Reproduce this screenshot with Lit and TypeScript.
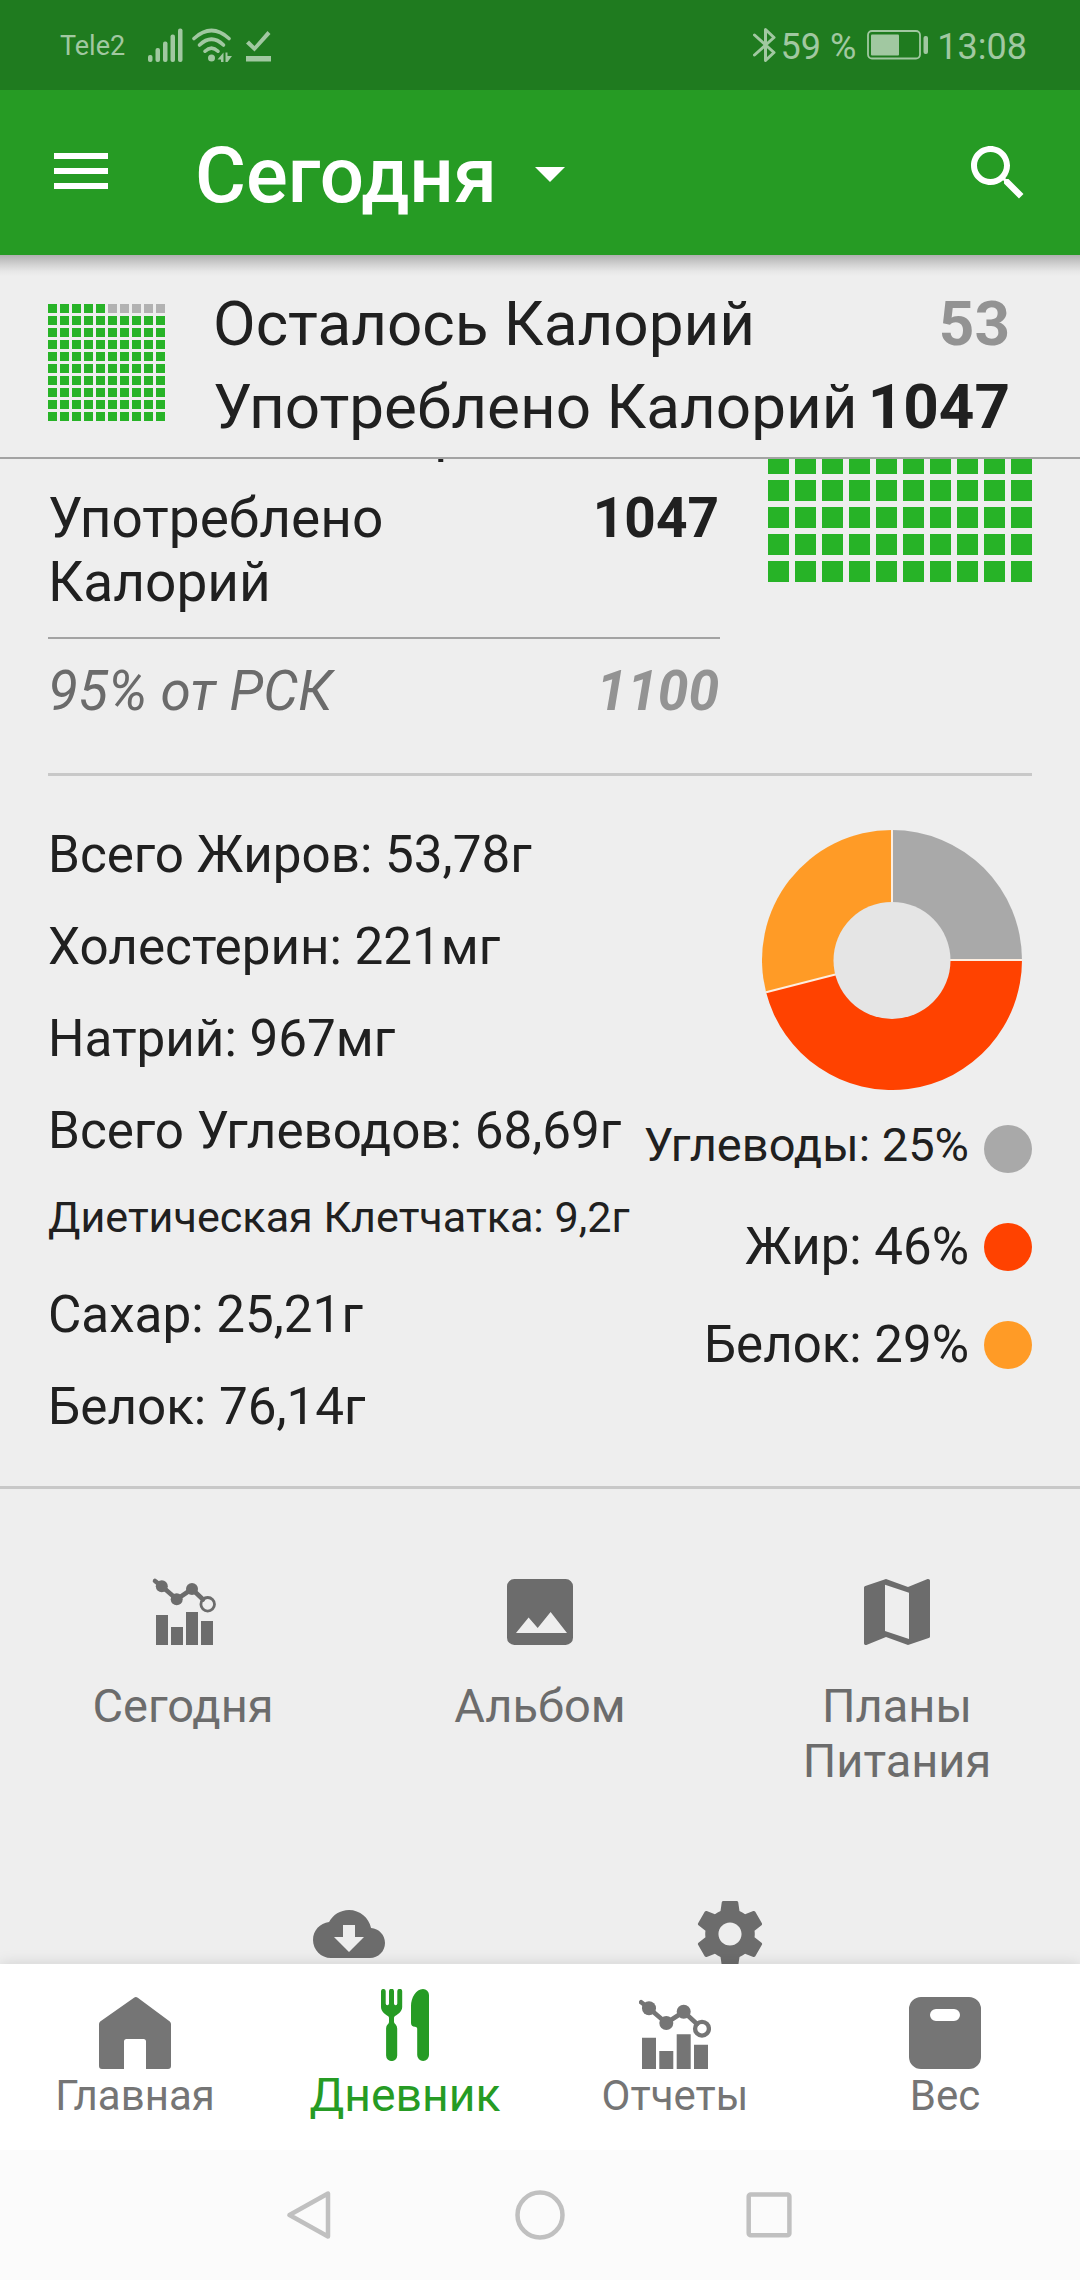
import { LitElement, html, css, svg } from "lit";
import { customElement, property } from "lit/decorators.js";
import { classMap } from "lit/directives/class-map.js";

/** 10×10 waffle chart: each cell is one percent, filled from the bottom up. */
@customElement("percent-grid")
class PercentGrid extends LitElement {
  @property({ type: Number }) percent = 0;

  static styles = css`
    :host {
      display: grid;
      grid-template-columns: repeat(10, var(--cell));
      grid-auto-rows: var(--cell);
      gap: var(--gap);
    }
    .cell {
      background: #27b327;
    }
    .rest {
      background: #b2b2b2;
    }
  `;

  render() {
    const cells = Array.from({ length: 100 }, (_, i) => {
      const row = Math.floor(i / 10);
      const rank = (9 - row) * 10 + (i % 10);
      return rank >= this.percent;
    });
    return cells.map((rest) => html`<i class=${classMap({ cell: true, rest })}></i>`);
  }
}

interface Slice {
  label: string;
  value: number;
  tone: string;
  compact?: boolean;
}

const SLICES: Slice[] = [
  { label: "Углеводы", value: 25, tone: "gray", compact: true },
  { label: "Жир", value: 46, tone: "red" },
  { label: "Белок", value: 29, tone: "orange" },
];

const NUTRIENTS = [
  { text: "Всего Жиров: 53,78г" },
  { text: "Холестерин: 221мг" },
  { text: "Натрий: 967мг" },
  { text: "Всего Углеводов: 68,69г" },
  { text: "Диетическая Клетчатка: 9,2г", small: true },
  { text: "Сахар: 25,21г" },
  { text: "Белок: 76,14г" },
];

const chartIcon = html`<svg class="ic" viewBox="0 0 72 72">
  <path d="M9 39h12v30H9zM24 51h12v18H24zM39 36h12v33H39zM54 45h12v24H54z" />
  <path class="ln" d="M8 5 14.8 10.3 29.7 23.3 45 13 56 23.5" />
  <circle cx="14.8" cy="10.3" r="6" /><circle cx="29.7" cy="23.3" r="6" /><circle cx="45" cy="13" r="6" />
  <circle class="ring" cx="60.7" cy="28.3" r="6.8" />
</svg>`;

const imageIcon = html`<svg class="ic" viewBox="0 0 72 72">
  <path
    fill-rule="evenodd"
    d="M10.300 3h51.400a7.300 7.300 0 0 1 7.300 7.300v51.400a7.300 7.300 0 0 1-7.300 7.300H10.300A7.300 7.300 0 0 1 3 61.700V10.300A7.300 7.300 0 0 1 10.300 3zM12 57h51L46.600 36 33.700 52 24.600 41.500z"
  />
</svg>`;

const mapIcon = html`<svg class="ic" viewBox="0 0 72 72">
  <path
    fill-rule="evenodd"
    d="M67.200 3l-.6.1L47 11 25 3 4.300 10c-.8.300-1.300.9-1.300 1.800V67.200c0 1 .8 1.800 1.800 1.800l.6-.1L25 61l22 8 20.700-7c.8-.2 1.300-.9 1.300-1.800V4.800c0-1-.8-1.800-1.800-1.800zM48 63 24 55V8.700L48 16.700z"
  />
</svg>`;

const cloudIcon = html`<svg class="ic" viewBox="0 0 24 24">
  <path
    d="M19.350 10.040C18.670 6.590 15.640 4 12 4 9.110 4 6.600 5.640 5.350 8.040 2.340 8.360 0 10.910 0 14c0 3.310 2.690 6 6 6h13c2.760 0 5-2.240 5-5 0-2.640-2.050-4.780-4.650-4.960zM17 13l-5 5-5-5h3V9h4v4h3z"
  />
</svg>`;

const gearIcon = html`<svg class="ic" viewBox="1.100 1.100 21.800 21.800">
  <path
    d="M19.430 12.980c.04-.32.07-.64.07-.98s-.03-.66-.07-.98l2.110-1.650c.19-.15.24-.42.12-.64l-2-3.460c-.12-.22-.39-.3-.61-.22l-2.490 1c-.52-.4-1.080-.73-1.690-.98l-.38-2.650C14.460 2.180 14.250 2 14 2h-4c-.25 0-.46.18-.49.42l-.38 2.650c-.61.25-1.170.59-1.690.98l-2.490-1c-.23-.09-.49 0-.61.22l-2 3.460c-.13.22-.07.49.12.64l2.110 1.650c-.04.32-.07.65-.07.98s.03.66.07.98l-2.110 1.650c-.19.15-.24.42-.12.64l2 3.460c.12.22.39.3.61.22l2.490-1c.52.4 1.080.73 1.690.98l.38 2.650c.03.24.24.42.49.42h4c.25 0 .46-.18.49-.42l.38-2.650c.61-.25 1.170-.59 1.690-.98l2.490 1c.23.09.49 0 .61-.22l2-3.460c.12-.22.07-.49-.12-.64l-2.110-1.650zM12 15.500c-1.930 0-3.500-1.570-3.500-3.500s1.570-3.500 3.500-3.500 3.500 1.570 3.500 3.500-1.570 3.500-3.500 3.500z"
  />
</svg>`;

const homeIcon = html`<svg class="ic" viewBox="0 0 72 72">
  <path
    d="M35 .8Q36.800-.8 38.800.8L70.800 24.500Q72 25.500 72 27V69a3 3 0 0 1-3 3H47V44.500A2.500 2.500 0 0 0 44.500 42H27.500A2.500 2.500 0 0 0 25 44.500V72H3a3 3 0 0 1-3-3V27Q0 25.500 1.200 24.500z"
  />
</svg>`;

const foodIcon = html`<svg class="ic" viewBox="0 0 72 72">
  <path
    d="M12 2.300a2.300 2.300 0 0 1 4.700 0V14.500a1.650 1.650 0 0 0 3.300 0V2.300a2.500 2.500 0 0 1 5 0V14.500a1.650 1.650 0 0 0 3.300 0V2.300a2.450 2.450 0 0 1 4.900 0V18C33.200 23 28 25.500 25.500 27.500Q25 28 25 29V33Q25.200 34.500 26.500 35.300 28.200 37 28.200 39.500V66.500a5.550 5.550 0 0 1-11.100 0V39.500Q17 37 18.800 35.300 20 34.500 20 33V29Q20 28 19.500 27.500C17 25.500 12 23 12 18z"
  />
  <path d="M54 0a6 6 0 0 1 6 6V66a5.900 5.900 0 0 1-11.800 0V39.500Q48 37.800 46 37.700 42 37.500 42 34V17C42 9 47 0 54 0z" />
</svg>`;

const reportIcon = html`<svg class="ic" viewBox="0 0 72 72">
  <path d="M3 40.700h14V72H3zM20.300 54h14v18h-14zM37.700 37.300h14V72h-14zM55 47.700h14V72H55z" />
  <path class="ln" d="M2.200 5.200 10 11.300 27.300 26 44.700 14.700 58 27" />
  <circle cx="10" cy="11.300" r="7" /><circle cx="27.300" cy="26" r="7" /><circle cx="44.700" cy="14.700" r="7" />
  <circle class="ring thick" cx="63" cy="31.700" r="6.900" />
</svg>`;

const scaleIcon = html`<svg class="ic" viewBox="0 0 72 72">
  <path
    fill-rule="evenodd"
    d="M12 0h48a12 12 0 0 1 12 12v48a12 12 0 0 1-12 12H12A12 12 0 0 1 0 60V12A12 12 0 0 1 12 0zM27 12a6 6 0 0 0 0 12h18a6 6 0 0 0 0-12z"
  />
</svg>`;

@customElement("app-root")
class AppRoot extends LitElement {
  static styles = css`
    :host {
      display: block;
      width: 1080px;
      height: 2280px;
      overflow: hidden;
      background: #eee;
      color: #202020;
      font-family: Roboto, "Noto Sans", sans-serif;
    }
    * {
      box-sizing: border-box;
    }
    svg {
      display: block;
      flex: none;
    }
    .screen {
      display: flex;
      flex-direction: column;
      height: 2280px;
    }
    .status {
      flex: none;
      height: 90px;
      background: #1f7b1f;
      color: #a1c8a1;
      display: flex;
      align-items: center;
      padding: 0 53px 0 60px;
      font-size: 36px;
      line-height: 44px;
      white-space: pre;
    }
    .carrier {
      font-size: 27px;
      margin: 1px 22px 0 0;
    }
    .status .spacer {
      flex: 1;
    }
    .status svg {
      fill: currentColor;
    }
    .level {
      margin: 3px 0 0 4px;
    }
    .battery {
      margin: 0 8px 0 11px;
    }
    .clock {
      margin-top: 3px;
    }
    .header {
      flex: none;
      height: 165px;
      background: #269b24;
      color: #fff;
      display: flex;
      align-items: center;
      padding: 0 46px 0 54px;
    }
    .header svg {
      fill: currentColor;
    }
    .header .menu {
      margin-bottom: 3px;
    }
    .title {
      margin: 0 0 0 87px;
      font-size: 78px;
      line-height: 92px;
      font-weight: 500;
      padding-top: 6px;
    }
    .caret {
      margin-left: 17px;
      margin-top: 1px;
    }
    .find {
      margin-left: auto;
    }
    .sticky {
      flex: none;
      height: 204px;
      border-bottom: 2px solid #a3a3a3;
      background: linear-gradient(#b0b0b0, #d0d0d0 9px, #e6e6e6 16px, #eee 21px);
      display: flex;
      padding: 27px 70px 0 48px;
      font-size: 62px;
      line-height: 83px;
      white-space: nowrap;
    }
    .mini {
      --cell: 9px;
      --gap: 3px;
      margin: 22px 48px 0 0;
      align-self: flex-start;
    }
    .totals {
      flex: 1;
    }
    .pair {
      display: flex;
      justify-content: space-between;
    }
    .val {
      font-weight: 700;
    }
    .soft {
      color: #939393;
    }
    .scroll {
      flex: none;
      height: 1505px;
      overflow: hidden;
    }
    .overview {
      display: flex;
      justify-content: space-between;
      margin: -141px 48px 0;
      padding-bottom: 50px;
      border-bottom: 3px solid #c8c8c8;
      font-size: 55px;
      line-height: 64px;
    }
    .sums {
      width: 672px;
      padding-top: 82px;
    }
    .sums .val {
      margin-right: 1px;
    }
    .sums .pair + .pair {
      margin-top: 22px;
      padding-bottom: 23px;
      border-bottom: 2px solid #a3a3a3;
    }
    .sums .lbl {
      max-width: 500px;
    }
    .sums .pair.goal {
      margin-top: 20px;
      padding: 0;
      border: 0;
      font-style: italic;
      color: #6b6b6b;
    }
    .pair.goal .val {
      color: #939393;
    }
    .big {
      --cell: 21px;
      --gap: 6px;
      align-self: flex-start;
    }
    .macros {
      height: 713px;
      border-bottom: 3px solid #c8c8c8;
      padding: 0 48px;
      display: flex;
      justify-content: space-between;
      white-space: nowrap;
    }
    .facts {
      padding-top: 32.500px;
      font-size: 51.200px;
    }
    .fact {
      height: 92px;
      line-height: 92px;
    }
    .fact.small {
      font-size: 43.100px;
      line-height: 81px;
    }
    .split {
      display: flex;
      flex-direction: column;
      align-items: flex-end;
      padding-top: 54px;
    }
    .donut {
      width: 260px;
      height: 260px;
      margin: 0 10px 10px 0;
    }
    .key {
      height: 98px;
      display: flex;
      align-items: center;
      gap: 15px;
      font-size: 51px;
      line-height: 60px;
    }
    .key.compact .name {
      font-size: 47px;
      margin-top: -8px;
    }
    .dot {
      width: 48px;
      height: 48px;
      border-radius: 50%;
    }
    .gray {
      fill: #a9a9a9;
      background: #a9a9a9;
    }
    .red {
      fill: #ff4200;
      background: #ff4200;
    }
    .orange {
      fill: #ff9b26;
      background: #ff9b26;
    }
    .hole {
      fill: #e5e5e5;
    }
    .cut {
      stroke: #fdeee0;
      stroke-width: 2;
    }
    .tools {
      padding: 87px 4.500px 0;
      color: #6c6c6c;
      font-size: 47px;
      line-height: 55px;
      text-align: center;
    }
    .toolrow {
      display: flex;
      justify-content: center;
    }
    .toolrow + .toolrow {
      margin-top: 110.500px;
      margin-right: 2px;
    }
    .tool {
      width: 357px;
      display: flex;
      flex-direction: column;
      align-items: center;
      gap: 29.500px;
    }
    .tool.wide {
      width: 381px;
    }
    .tool span {
      max-width: 210px;
    }
    .ic {
      width: 72px;
      height: 72px;
      fill: currentColor;
    }
    .ln {
      fill: none;
      stroke: currentColor;
      stroke-width: 4.600;
      stroke-linecap: round;
      stroke-linejoin: round;
    }
    .ring {
      fill: none;
      stroke: currentColor;
      stroke-width: 2.800;
    }
    .ring.thick {
      stroke-width: 4.300;
    }
    .tabs {
      flex: none;
      height: 186px;
      background: #fff;
      box-shadow: 0 0 14px rgba(0, 0, 0, 0.13);
      position: relative;
      display: flex;
      color: #757575;
      font-size: 42px;
      line-height: 50px;
    }
    .tab {
      flex: 1;
      display: flex;
      flex-direction: column;
      align-items: center;
      padding-top: 33px;
      gap: 2px;
    }
    .tab.on {
      padding-top: 25px;
      gap: 6.500px;
      color: #269b24;
      font-size: 46.300px;
      line-height: 54px;
    }
    .sys {
      flex: 1;
      position: relative;
      background: #fbfbfb;
      display: flex;
      align-items: center;
      justify-content: center;
      gap: 180px;
    }
    .sys svg {
      fill: none;
      stroke: #c0c0c0;
      stroke-width: 4.500;
      stroke-linejoin: round;
    }
  `;

  private donut() {
    const point = (share: number, r: number) => {
      const a = (share / 100) * 2 * Math.PI;
      return `${130 + r * Math.sin(a)} ${130 - r * Math.cos(a)}`;
    };
    let from = 0;
    const wedges = SLICES.map((s) => {
      const start = from;
      from += s.value;
      return svg`<path class=${s.tone} d="M130 130L${point(start, 130)}A130 130 0 0 1 ${point(from, 130)}z" />`;
    });
    const cuts = [0, 25, 71].map((p) => svg`<path class="cut" d="M130 130L${point(p, 130)}" />`);
    return html`<svg class="donut" viewBox="0 0 260 260">
      ${wedges}${cuts}
      <circle class="hole" cx="130" cy="130.400" r="58.500" />
    </svg>`;
  }

  private tool(icon: unknown, label = "", wide = false) {
    return html`<div class=${classMap({ tool: true, wide })}>
      ${icon}${label ? html`<span>${label}</span>` : null}
    </div>`;
  }

  private tab(icon: unknown, label: string, on = false) {
    return html`<div class=${classMap({ tab: true, on })}>${icon}<span>${label}</span></div>`;
  }

  render() {
    return html`<div class="screen">
      <div class="status">
        <span class="carrier">Tele2</span>
        <svg width="126" height="36" viewBox="0 0 126 36">
          <rect x="1" y="28" width="4.500" height="7" rx="2" />
          <rect x="8.500" y="21" width="4.500" height="14" rx="2" />
          <rect x="16" y="14.500" width="4.500" height="20.500" rx="2" />
          <rect x="23.500" y="7.500" width="4.500" height="27.500" rx="2" />
          <rect x="31" y="1.500" width="4.500" height="33.500" rx="2" />
          <g fill="none" stroke="currentColor" stroke-width="3.600" stroke-linecap="round">
            <path d="M47 11.500Q64.500-4.500 82 11.500" />
            <path d="M52.500 18Q64.500 6.500 76.500 18" />
            <path d="M58 24.200Q64.500 18 71 24.200" />
          </g>
          <circle cx="64.500" cy="31" r="3.500" />
          <path d="M76.500 25.500V35H74V32.500H70.500zM78.500 35V25.500H80.500V29H85L80.500 35z" />
          <path d="M99 16.500l3-3 5.500 5.500 13-15 3 3-16 17.500zM99 29h25v5.500H99z" />
        </svg>
        <span class="spacer"></span>
        <svg width="24" height="36" viewBox="0 0 24 36">
          <path
            d="M1.500 8 21 25.500 12.500 33.500V2.500L21 10.500 1.500 28"
            fill="none"
            stroke="currentColor"
            stroke-width="3"
            stroke-linecap="round"
            stroke-linejoin="round"
          />
        </svg>
        <span class="level">59 %</span>
        <svg class="battery" width="62" height="30" viewBox="0 0 62 30">
          <rect x="1" y="1" width="52" height="27.500" rx="4" fill="none" stroke="currentColor" stroke-width="1.800" />
          <rect x="4" y="4.500" width="28" height="21" rx="1" />
          <rect x="56.500" y="6" width="4.500" height="18" rx="2" />
        </svg>
        <span class="clock">13:08</span>
      </div>

      <div class="header">
        <svg class="menu" width="54" height="36" viewBox="0 0 54 36">
          <path d="M0 0h54v6H0zM0 15h54v6H0zM0 30h54v6H0z" />
        </svg>
        <h1 class="title">Сегодня</h1>
        <svg class="caret" width="72" height="72" viewBox="0 0 24 24"><path d="M7 10l5 5 5-5z" /></svg>
        <svg class="find" width="72" height="72" viewBox="0 0 24 24">
          <path
            d="M15.500 14h-.79l-.28-.27C15.410 12.590 16 11.110 16 9.500 16 5.910 13.090 3 9.500 3S3 5.910 3 9.500 5.910 16 9.500 16c1.610 0 3.090-.59 4.230-1.570l.27.28v.79l5 4.990L20.490 19l-4.990-5zm-6 0C7.010 14 5 11.990 5 9.500S7.010 5 9.500 5 14 7.010 14 9.500 11.990 14 9.500 14z"
          />
        </svg>
      </div>

      <div class="sticky">
        <percent-grid class="mini" .percent=${95}></percent-grid>
        <div class="totals">
          <div class="pair"><span>Осталось Калорий</span><span class="val soft">53</span></div>
          <div class="pair"><span>Употреблено Калорий</span><span class="val">1047</span></div>
        </div>
      </div>

      <div class="scroll">
        <div class="overview">
          <div class="sums">
            <div class="pair"><span class="lbl">Осталось Калорий</span></div>
            <div class="pair"><span class="lbl">Употреблено Калорий</span><span class="val">1047</span></div>
            <div class="pair goal"><span class="lbl">95% от РСК</span><span class="val">1100</span></div>
          </div>
          <percent-grid class="big" .percent=${95}></percent-grid>
        </div>

        <div class="macros">
          <div class="facts">
            ${NUTRIENTS.map((n) => html`<div class=${classMap({ fact: true, small: !!n.small })}>${n.text}</div>`)}
          </div>
          <div class="split">
            ${this.donut()}
            ${SLICES.map(
              (s) => html`<div class=${classMap({ key: true, compact: !!s.compact })}>
                <span class="name">${s.label}: ${s.value}%</span><i class="dot ${s.tone}"></i>
              </div>`
            )}
          </div>
        </div>

        <div class="tools">
          <div class="toolrow">
            ${this.tool(chartIcon, "Сегодня")} ${this.tool(imageIcon, "Альбом")} ${this.tool(mapIcon, "Планы Питания")}
          </div>
          <div class="toolrow">${this.tool(cloudIcon, "", true)} ${this.tool(gearIcon, "", true)}</div>
        </div>
      </div>

      <div class="tabs">
        ${this.tab(homeIcon, "Главная")} ${this.tab(foodIcon, "Дневник", true)} ${this.tab(reportIcon, "Отчеты")}
        ${this.tab(scaleIcon, "Вес")}
      </div>

      <div class="sys">
        <svg width="48" height="50" viewBox="0 0 48 50"><path d="M2.500 25 41 3.500V46.500z" /></svg>
        <svg width="50" height="50" viewBox="0 0 50 50"><circle cx="25" cy="25" r="22.500" /></svg>
        <svg width="48" height="50" viewBox="0 0 48 50"><rect x="3.700" y="4.600" width="40.700" height="40.700" rx="2" /></svg>
      </div>
    </div>`;
  }
}
